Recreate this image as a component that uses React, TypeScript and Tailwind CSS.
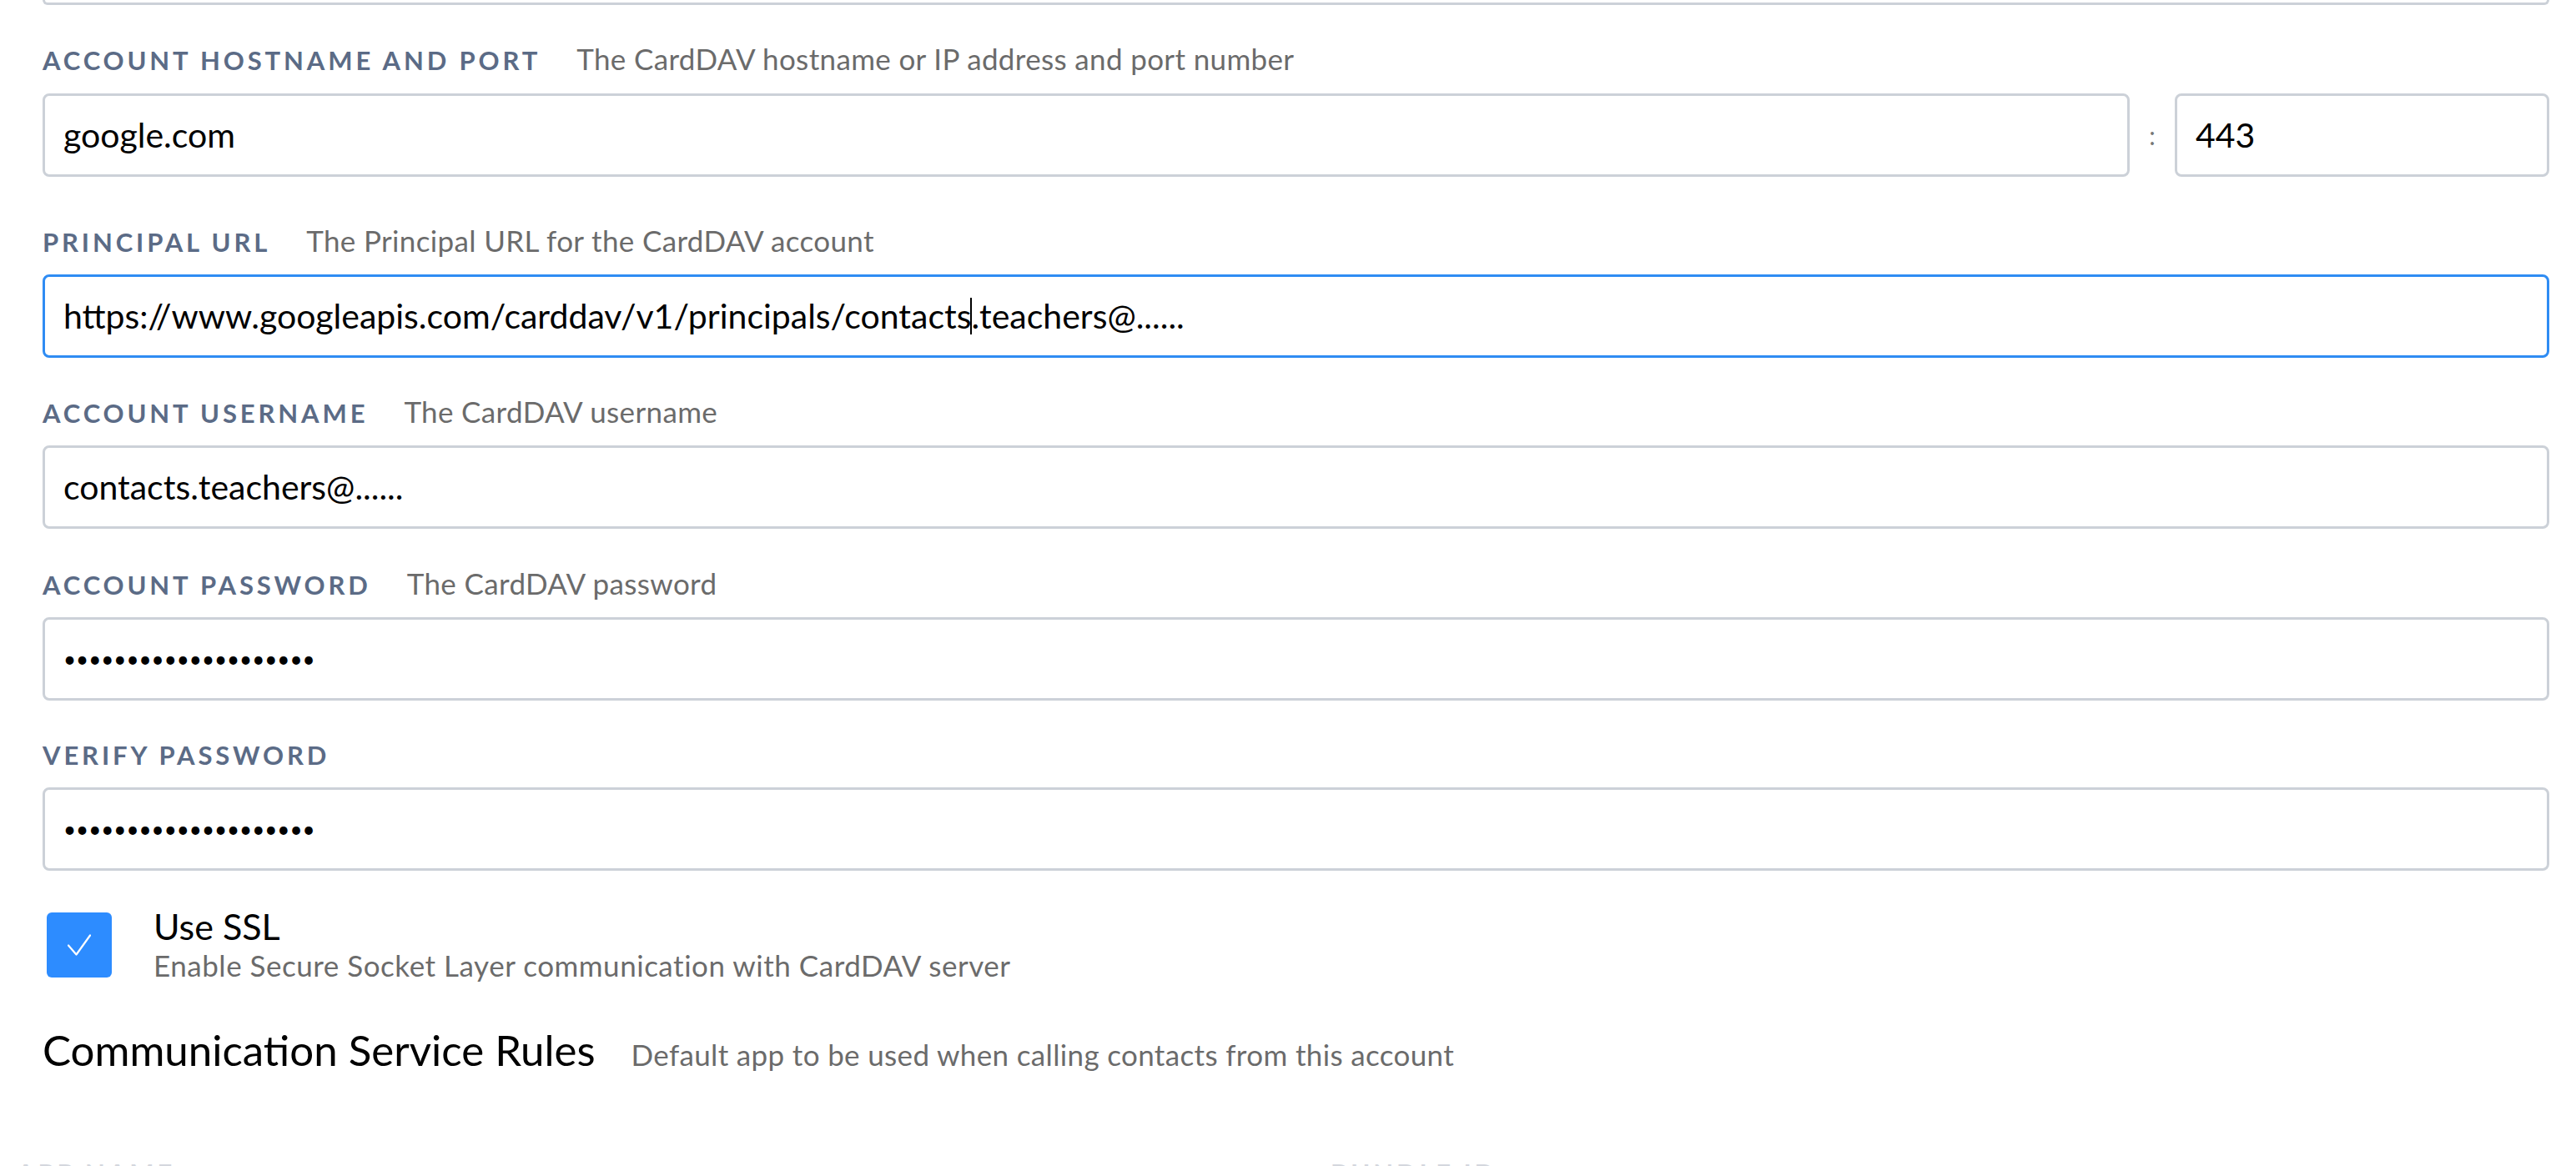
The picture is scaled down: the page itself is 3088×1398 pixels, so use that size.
import React from 'react';

const DOTS = '••••••••••••••••••••';

function Label({ title, hint }: { title: string; hint?: string }) {
  return (
    <div className="flex items-baseline gap-[43px] h-[40px] leading-[40px]">
      <span className="text-[31px] font-bold tracking-[0.125em] text-[#5b6b86] uppercase">{title}</span>
      {hint && <span className="text-[35px] tracking-[0.01em] text-[#6b6b6b]">{hint}</span>}
    </div>
  );
}

function Box({ children, focused }: { children?: React.ReactNode; focused?: boolean }) {
  return (
    <div
      className={[
        'h-[100px] rounded-[8px] border-[3px] bg-white flex items-center px-[22px] text-[41px] text-black whitespace-nowrap',
        focused ? 'border-[#2f8cf3]' : 'border-[#ccd1d8]',
      ].join(' ')}
    >
      {children}
    </div>
  );
}

function Dots() {
  return <span className="text-[26px] leading-none">{DOTS}</span>;
}

export default function App() {
  return (
    <div className="h-[1398px] overflow-hidden bg-white pl-[51px] pr-[32px] font-['Lato','Open_Sans',sans-serif]">
      {/* previous field, cut off at top */}
      <div className="h-[6px] rounded-b-[8px] border-x-[3px] border-b-[3px] border-[#ccd1d8]" />

      {/* hostname + port */}
      <div className="mt-[44px]">
        <Label title="Account hostname and port" hint="The CardDAV hostname or IP address and port number" />
        <div className="mt-[22px] flex items-center">
          <div className="flex-1">
            <Box>google.com</Box>
          </div>
          <span className="w-[54px] text-center text-[30px] text-[#777]">:</span>
          <div className="w-[449px]">
            <Box>443</Box>
          </div>
        </div>
      </div>

      <div className="mt-[56px]">
        <Label title="Principal URL" hint="The Principal URL for the CardDAV account" />
        <div className="mt-[21px]">
          <Box focused>
            https://www.googleapis.com/carddav/v1/principals/contacts
            <span className="inline-block w-[2px] h-[44px] bg-black -mx-[1px]" />
            .teachers@......
          </Box>
        </div>
      </div>

      <div className="mt-[44px]">
        <Label title="Account username" hint="The CardDAV username" />
        <div className="mt-[21px]">
          <Box>contacts.teachers@......</Box>
        </div>
      </div>

      <div className="mt-[45px]">
        <Label title="Account password" hint="The CardDAV password" />
        <div className="mt-[21px]">
          <Box>
            <Dots />
          </Box>
        </div>
      </div>

      <div className="mt-[45px]">
        <Label title="Verify password" />
        <div className="mt-[19px]">
          <Box>
            <Dots />
          </Box>
        </div>
      </div>

      {/* SSL checkbox */}
      <div className="mt-[50px] flex items-start gap-[50px] pl-[5px]">
        <div className="w-[78px] h-[78px] shrink-0 rounded-[6px] bg-[#2d8cff] flex items-center justify-center">
          <svg viewBox="0 0 28 26" className="w-[28px] h-[26px]" fill="none" stroke="white" strokeWidth={2.2} strokeLinecap="round" strokeLinejoin="round">
            <path d="M1 13.5L10.5 24.5L27 1.5" />
          </svg>
        </div>
        <div className="-mt-[9px]">
          <div className="text-[43px] leading-[52px] text-black">Use SSL</div>
          <div className="text-[35px] leading-[40px] tracking-[0.015em] text-[#6b6b6b]">
            Enable Secure Socket Layer communication with CardDAV server
          </div>
        </div>
      </div>

      {/* section heading */}
      <div className="mt-[52px] flex items-baseline gap-[43px]">
        <h2 className="text-[51px] leading-[60px] text-black">Communication Service Rules</h2>
        <span className="text-[35px] tracking-[0.01em] text-[#6b6b6b]">Default app to be used when calling contacts from this account</span>
      </div>

      {/* table header, faded and cut off */}
      <div className="mt-[95px] -ml-[31px] flex text-[31px] font-bold tracking-[0.125em] text-[#d4d7dd] uppercase leading-[40px]">
        <span className="w-[1575px]">App name</span>
        <span>Bundle ID</span>
      </div>
    </div>
  );
}
